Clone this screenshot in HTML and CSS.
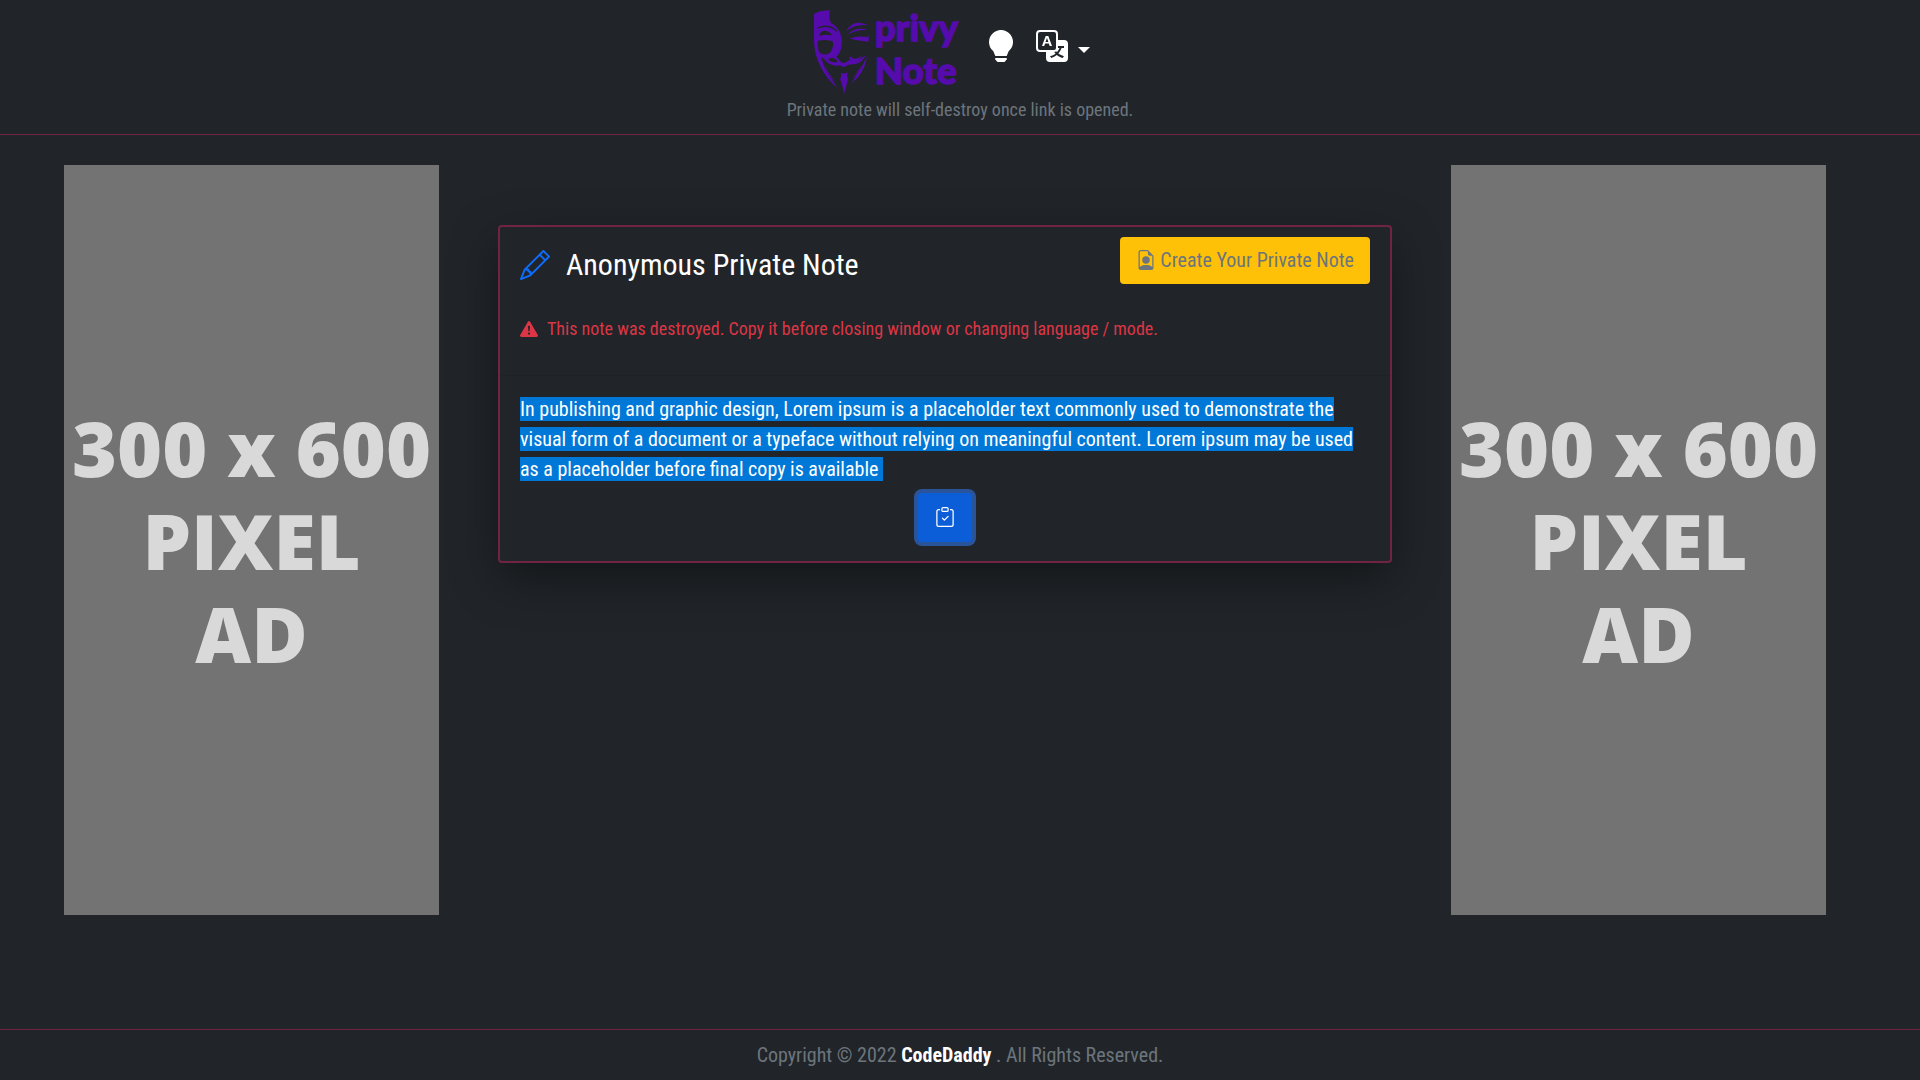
FILE: index.html
```html
<!DOCTYPE html>
<html lang="en">
<head>
<meta charset="utf-8">
<meta name="viewport" content="width=device-width, initial-scale=1">
<title>Privy Note</title>
<link rel="stylesheet" href="styles.css">
</head>
<body>
<header class="site-header">
  <nav class="nav">
    <a class="logo" href="#" aria-label="Privy Note home">
      <svg class="logo-art" viewBox="0 0 480 270">
        <g transform="translate(6 9)">
          <path fill-rule="evenodd" d="M6 18Q22 8 54 7Q49 26 57 46Q72 52 82 70Q91 88 89 110Q87 134 72 147Q82 153 86 161Q95 169 104 161Q113 154 124 158Q145 156 162 140Q150 166 124 169Q106 169 96 178Q86 171 72 173Q48 171 37 154L28 146Q34 180 56 210Q66 224 76 240Q44 214 25 175Q7 141 6 100ZM25 74Q32 66 44 69Q55 72 60 82Q42 78 22 84ZM17 99Q38 93 62 100Q66 114 58 128Q50 141 36 139Q24 138 20 130Q16 114 17 99ZM48 153Q56 166 77 162Q72 150 59 149Z"/>
          <path fill="none" stroke="#212529" stroke-width="4" d="M17 60Q48 46 76 70"/>
          <path d="M102 70Q124 30 168 52Q132 46 102 70ZM106 80Q130 54 168 66Q132 64 106 80ZM113 92Q138 82 165 88L170 82L170 101Q140 98 113 92ZM111 151Q115 140 121 151Q137 156 151 142Q137 165 118 160ZM165 146Q156 198 118 226Q145 188 165 146ZM151 168Q140 196 122 214Q138 188 151 168ZM36 168Q49 198 72 224Q46 204 36 168ZM86 193Q96 200 107 193Q103 204 108 214Q103 235 96 258Q93 234 84 213Q90 206 86 193Z"/>
        </g>
        <text class="logo-text" x="194" y="107">privy</text>
        <text class="logo-text" x="194" y="236">Note</text>
      </svg>
    </a>
    <button class="icon-button" type="button" aria-label="Toggle colour mode">
      <svg class="icon-large" viewBox="0 0 16 16"><path d="M2 6a6 6 0 1 1 10.174 4.31c-.203.196-.359.4-.453.619l-.762 1.769A.5.5 0 0 1 10.500 13h-5a.5.5 0 0 1-.46-.302l-.761-1.770a1.964 1.964 0 0 0-.453-.618A5.984 5.984 0 0 1 2 6zm3 8.500a.5.5 0 0 1 .5-.5h5a.5.5 0 0 1 0 1l-.224.447a1 1 0 0 1-.894.553H6.618a1 1 0 0 1-.894-.553L5.500 15a.5.5 0 0 1-.5-.5z"/></svg>
    </button>
    <button class="icon-button dropdown" type="button" aria-label="Language" aria-haspopup="true">
      <svg class="icon-large" viewBox="0 0 16 16"><path d="M4.545 6.714 4.110 8H3l1.862-5h1.284L8 8H6.833l-.435-1.286H4.545zm1.634-.736L5.500 3.956h-.049l-.679 2.022H6.180z"/><path d="M0 2a2 2 0 0 1 2-2h7a2 2 0 0 1 2 2v3h3a2 2 0 0 1 2 2v7a2 2 0 0 1-2 2H7a2 2 0 0 1-2-2v-3H2a2 2 0 0 1-2-2V2zm2-1a1 1 0 0 0-1 1v7a1 1 0 0 0 1 1h7a1 1 0 0 0 1-1V2a1 1 0 0 0-1-1H2zm7.138 9.995c.193.301.402.583.630.846-.748.575-1.673 1.001-2.768 1.292.178.217.451.635.555.867 1.125-.359 2.080-.844 2.886-1.494.777.665 1.739 1.165 2.930 1.472.133-.254.414-.673.629-.890-1.125-.253-2.057-.694-2.820-1.284.681-.747 1.222-1.651 1.621-2.757H14V8h-3v1.047h.765c-.318.844-.740 1.546-1.272 2.130a6.066 6.066 0 0 1-.415-.492 1.988 1.988 0 0 1-.940.310z"/></svg>
      <span class="caret"></span>
    </button>
  </nav>
  <p class="tagline">Private note will self-destroy once link is opened.</p>
</header>

<main class="content">
  <aside class="ad"><span>300 x 600</span><span>PIXEL</span><span>AD</span></aside>

  <section class="card">
    <div class="card-header">
      <div class="card-top">
        <h1 class="card-title">
          <svg class="icon-title" viewBox="0 0 16 16"><path d="M12.146.146a.5.5 0 0 1 .708 0l3 3a.5.5 0 0 1 0 .708l-10 10a.5.5 0 0 1-.168.110l-5 2a.5.5 0 0 1-.650-.650l2-5a.5.5 0 0 1 .110-.168l10-10zM11.207 2.500 13.500 4.793 14.793 3.500 12.500 1.207 11.207 2.500zm1.586 3L10.500 3.207 4 9.707V10h.5a.5.5 0 0 1 .5.5v.5h.5a.5.5 0 0 1 .5.5v.5h.293l6.500-6.500zm-9.761 5.175-.106.106-1.528 3.821 3.821-1.528.106-.106A.5.5 0 0 1 5 12.500V12h-.5a.5.5 0 0 1-.5-.5V11h-.5a.5.5 0 0 1-.468-.325z"/></svg>
          Anonymous Private Note
        </h1>
        <button class="create-button" type="button">
          <svg class="icon-small" viewBox="0 0 16 16"><path d="M11 8a3 3 0 1 1-6 0 3 3 0 0 1 6 0z"/><path d="M14 14V4.500L9.500 0H4a2 2 0 0 0-2 2v12a2 2 0 0 0 2 2h8a2 2 0 0 0 2-2zM9.500 3A1.500 1.500 0 0 0 11 4.500h2v9.255S12 12 8 12s-5 1.755-5 1.755V2a1 1 0 0 1 1-1h5.500v2z"/></svg>
          Create Your Private Note
        </button>
      </div>
      <p class="warning">
        <svg class="icon-warning" viewBox="0 0 16 16"><path d="M8.982 1.566a1.130 1.130 0 0 0-1.960 0L.165 13.233c-.457.778.091 1.767.980 1.767h13.713c.889 0 1.438-.990.980-1.767L8.982 1.566zM8 5c.535 0 .954.462.900.995l-.350 3.507a.552.552 0 0 1-1.100 0L7.100 5.995A.905.905 0 0 1 8 5zm.002 6a1 1 0 1 1 0 2 1 1 0 0 1 0-2z"/></svg>
        This note was destroyed. Copy it before closing window or changing language / mode.
      </p>
    </div>
    <div class="card-body">
      <p class="note"><mark class="selected">In publishing and graphic design, Lorem ipsum is a placeholder text commonly used to demonstrate the visual form of a document or a typeface without relying on meaningful content. Lorem ipsum may be used as a placeholder before final copy is available&nbsp;</mark></p>
      <button class="copy-button" type="button" aria-label="Copy note">
        <svg class="icon-small" viewBox="0 0 16 16"><path fill-rule="evenodd" d="M10.854 7.146a.5.5 0 0 1 0 .708l-3 3a.5.5 0 0 1-.708 0l-1.500-1.500a.5.5 0 1 1 .708-.708L7.500 9.793l2.646-2.647a.5.5 0 0 1 .708 0z"/><path d="M4 1.500H3a2 2 0 0 0-2 2V14a2 2 0 0 0 2 2h10a2 2 0 0 0 2-2V3.500a2 2 0 0 0-2-2h-1v1h1a1 1 0 0 1 1 1V14a1 1 0 0 1-1 1H3a1 1 0 0 1-1-1V3.500a1 1 0 0 1 1-1h1v-1z"/><path d="M9.500 1a.5.5 0 0 1 .5.5v1a.5.5 0 0 1-.5.5h-3a.5.5 0 0 1-.5-.5v-1a.5.5 0 0 1 .5-.5h3zm-3-1A1.500 1.500 0 0 0 5 1.500v1A1.500 1.500 0 0 0 6.500 4h3A1.500 1.500 0 0 0 11 2.500v-1A1.500 1.500 0 0 0 9.500 0h-3z"/></svg>
      </button>
    </div>
  </section>

  <aside class="ad"><span>300 x 600</span><span>PIXEL</span><span>AD</span></aside>
</main>

<footer class="site-footer">Copyright © 2022 <a class="brand" href="#">CodeDaddy</a> . All Rights Reserved.</footer>
</body>
</html>
```
FILE: styles.css
```css
* {
  box-sizing: border-box;
}

body {
  display: flex;
  flex-direction: column;
  min-height: 100vh;
  margin: 0;
  background: #212529;
  color: #fff;
  font-family: "Roboto Condensed", "Liberation Sans Narrow", Roboto, sans-serif;
  font-size: 20px;
  line-height: 30px;
}

h1,
p {
  margin: 0;
}

svg {
  display: block;
  flex: none;
  fill: currentColor;
}

button {
  border: 0;
  font: inherit;
  cursor: pointer;
}

/* Header */
.site-header {
  display: flex;
  flex-direction: column;
  align-items: center;
  padding: 5px 16px 9px;
  border-bottom: 1px solid #702344;
}

.nav {
  display: flex;
  align-items: flex-start;
  padding-right: 20px;
}

.logo {
  color: #560bad;
}

.logo-art {
  width: 160px;
  height: 90px;
}

.logo-text {
  font: 900 110px Lato, sans-serif;
  stroke: currentColor;
  stroke-width: 4px;
}

.icon-button {
  display: flex;
  align-items: center;
  gap: 10px;
  margin: 25px 0 0 15px;
  padding: 0;
  background: none;
  color: #fff;
}

.dropdown {
  margin-left: 19px;
}

.icon-large {
  width: 32px;
  height: 32px;
}

.caret {
  margin-top: 7px;
  border: 6px solid transparent;
  border-top-color: #fff;
  border-bottom: 0;
}

.tagline {
  color: #6c757d;
  font-size: 18px;
}

/* Three columns: ad, note, ad */
.content {
  display: grid;
  flex: 1;
  grid-template-columns: 375px 1fr 375px;
  gap: 59px;
  align-items: start;
  padding: 30px 94px 30px 64px;
}

.ad {
  display: flex;
  flex-direction: column;
  align-items: center;
  justify-content: center;
  height: 750px;
  background: #737373;
  color: #d9d9d9;
  font: 800 77px/93px "Open Sans", sans-serif;
  white-space: nowrap;
}

.card {
  margin-top: 60px;
  border: 2px solid #702344;
  border-radius: 4px;
  box-shadow: 0 16px 48px rgba(0, 0, 0, 0.4);
}

.card-header {
  padding: 10px 20px 31px;
  border-bottom: 1px solid #1e2225;
}

.card-top {
  display: flex;
  align-items: flex-start;
  justify-content: space-between;
}

.card-title {
  display: flex;
  align-items: center;
  gap: 16px;
  margin-top: 10px;
  font-size: 30px;
  font-weight: 400;
  line-height: 36px;
}

.icon-title {
  width: 30px;
  height: 30px;
  color: #0d6efd;
}

.create-button {
  display: flex;
  align-items: center;
  gap: 4px;
  padding: 8px 16px 9px;
  border-radius: 4px;
  background: #ffc107;
  color: #6c757d;
}

.icon-small {
  width: 20px;
  height: 20px;
}

.warning {
  display: flex;
  align-items: center;
  gap: 9px;
  margin-top: 30px;
  color: #dc3545;
  font-size: 18px;
}

.icon-warning {
  width: 18px;
  height: 18px;
}

.card-body {
  display: flex;
  flex-direction: column;
  align-items: center;
  gap: 9px;
  padding: 18px 20px 19px;
}

.note {
  width: 100%;
}

.selected {
  background: #0078d7;
  color: #fff;
}

.copy-button {
  padding: 14px 17px 15px;
  border-radius: 4px;
  background: #0b5ed7;
  color: #fff;
  box-shadow: 0 0 0 4px #29549a;
}

/* Footer */
.site-footer {
  padding: 10px 16px;
  border-top: 1px solid #702344;
  color: #6c757d;
  text-align: center;
}

.brand {
  color: #fff;
  font-weight: 700;
  text-decoration: none;
}
```
